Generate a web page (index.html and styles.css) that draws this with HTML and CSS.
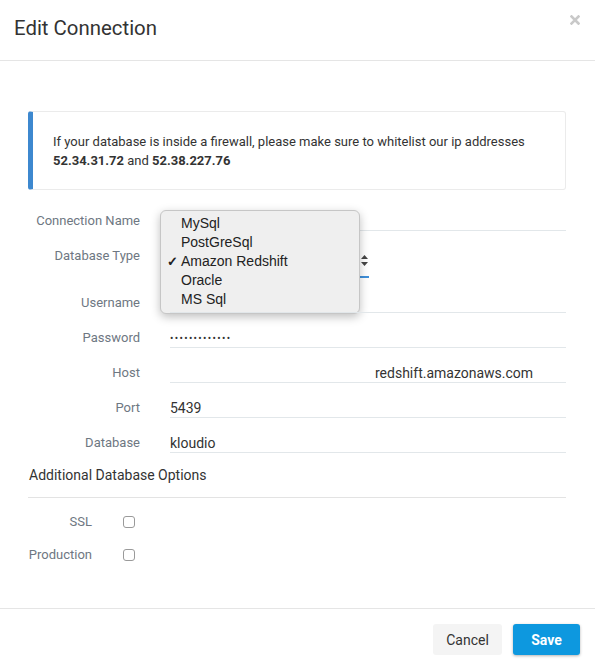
FILE: index.html
```html
<!DOCTYPE html>
<html>
<head>
<meta charset="utf-8">
<link rel="stylesheet" href="styles.css">
</head>
<body>
<div class="modal">
  <div class="modal-header">
    <h1 class="title">Edit Connection</h1>
    <span class="close" aria-label="Close">
      <svg width="10" height="10" viewBox="0 0 10 10"><path d="M1.5 1.5 L8.5 8.5 M8.5 1.5 L1.5 8.5" stroke="#c9c9c9" stroke-width="2.6" stroke-linecap="square"/></svg>
    </span>
  </div>
  <div class="modal-body">
    <div class="alert">If your database is inside a firewall, please make sure to whitelist our ip addresses <b>52.34.31.72</b> and <b>52.38.227.76</b></div>

    <div class="form">
      <div class="row">
        <label class="lbl">Connection Name</label>
        <div class="field"></div>
      </div>
      <div class="row">
        <label class="lbl">Database Type</label>
        <div class="field select">
          <svg class="arrows" width="7" height="11" viewBox="0 0 7 11"><path d="M3.5 0 L7 4 L0 4 Z M3.5 11 L7 7 L0 7 Z" fill="#444"/></svg>
        </div>
        <div class="dropdown">
          <div class="opt">MySql</div>
          <div class="opt">PostGreSql</div>
          <div class="opt checked"><span class="check">✓</span>Amazon Redshift</div>
          <div class="opt">Oracle</div>
          <div class="opt">MS Sql</div>
        </div>
      </div>
      <div class="row">
        <label class="lbl">Username</label>
        <div class="field"></div>
      </div>
      <div class="row">
        <label class="lbl">Password</label>
        <div class="field"><span class="dots">•••••••••••••</span></div>
      </div>
      <div class="row">
        <label class="lbl">Host</label>
        <div class="field host">redshift.amazonaws.com</div>
      </div>
      <div class="row">
        <label class="lbl">Port</label>
        <div class="field">5439</div>
      </div>
      <div class="row">
        <label class="lbl">Database</label>
        <div class="field">kloudio</div>
      </div>
    </div>

    <div class="section">Additional Database Options</div>
    <div class="options">
      <div class="opt-row">
        <label class="lbl small">SSL</label>
        <span class="checkbox"></span>
      </div>
      <div class="opt-row">
        <label class="lbl small">Production</label>
        <span class="checkbox"></span>
      </div>
    </div>
  </div>
  <div class="modal-footer">
    <button class="btn cancel">Cancel</button>
    <button class="btn save">Save</button>
  </div>
</div>
</body>
</html>
```

FILE: styles.css
```css
* { box-sizing: border-box; }
html, body { margin: 0; padding: 0; background: #fff; }
body { font-family: Roboto, "Liberation Sans", sans-serif; color: #333; width: 595px; height: 670px; overflow: hidden; }

.modal { width: 595px; }

.modal-header {
  height: 61px;
  border-bottom: 1px solid #e5e5e5;
  padding: 14px 14px 0 14px;
  display: flex;
  justify-content: space-between;
  align-items: flex-start;
}
.title { margin: 0; font-size: 20.4px; font-weight: 400; line-height: 28px; color: #333; }
.close { margin-top: 1px; margin-right: 1px; display: block; line-height: 0; }

.modal-body { padding: 50px 29px 44px 28px; }

.alert {
  border: 1px solid #ebebeb;
  border-left: 5px solid #3d88cf;
  border-radius: 3px;
  padding: 20px 20px 19px 20px;
  font-size: 13px;
  line-height: 19px;
  color: #333;
  height: 79px;
}
.alert b { font-weight: 700; }

.form { margin-top: 20px; }
.row { display: flex; align-items: flex-start; gap: 30px; margin-bottom: 14px; position: relative; }
.row:last-child { margin-bottom: 0; }
.lbl {
  width: 112px;
  flex: none;
  text-align: right;
  font-size: 13px;
  line-height: 20px;
  padding-top: 1px;
  color: #6e7782;
}
.field {
  flex: 1;
  height: 21px;
  line-height: 22px;
  font-size: 14px;
  color: #333;
  border-bottom: 1px solid #e2e7ea;
  white-space: nowrap;
  overflow: hidden;
}
.field.select {
  flex: none;
  width: 199px;
  height: 33px;
  border-bottom: 2px solid #3f8fd9;
  display: flex;
  align-items: center;
  justify-content: flex-end;
  padding-right: 1px;
  padding-bottom: 1px;
}
.arrows { display: block; }
.field.host { padding-left: 205px; }
.dots { font-size: 10px; letter-spacing: 1.35px; color: #333; vertical-align: 1px; }

.dropdown {
  position: absolute;
  left: 132px;
  top: -35px;
  width: 200px;
  height: 104px;
  background: #efefef;
  border: 1px solid #c6c6c6;
  border-radius: 6px;
  box-shadow: 0 3px 10px rgba(0,0,0,0.25);
  padding-top: 3px;
  font-family: "Liberation Sans", Arial, sans-serif;
  font-size: 14px;
  color: #222;
}
.opt { height: 19px; line-height: 19px; padding-left: 20px; position: relative; }
.check { position: absolute; left: 6px; top: 0; font-size: 13px; font-weight: 700; }

.section {
  margin-top: 12px;
  font-size: 14px;
  line-height: 20px;
  color: #333;
  padding-left: 1px;
  padding-bottom: 12px;
  border-bottom: 1px solid #e3e3e3;
}
.options { padding-top: 14px; }
.opt-row { display: flex; align-items: center; gap: 31px; margin-bottom: 13px; height: 20px; }
.lbl.small { width: 64px; padding-top: 0; }
.checkbox {
  width: 12px;
  height: 12px;
  border: 1px solid #9a9a9a;
  border-radius: 3px;
  background: #fff;
  display: block;
}

.modal-footer {
  position: absolute;
  left: 0;
  top: 608px;
  width: 595px;
  border-top: 1px solid #e5e5e5;
  padding: 15px 15px 15px 15px;
  display: flex;
  justify-content: flex-end;
  gap: 11px;
}
.btn {
  height: 31px;
  border: none;
  border-radius: 3px;
  font-family: Roboto, "Liberation Sans", sans-serif;
  font-size: 14px;
  padding: 0;
}
.cancel { width: 69px; background: #f4f4f4; color: #333; }
.save { width: 67px; background: #0d98df; color: #fff; font-weight: 700; box-shadow: 0 1px 3px rgba(0,0,0,0.3); }
```
